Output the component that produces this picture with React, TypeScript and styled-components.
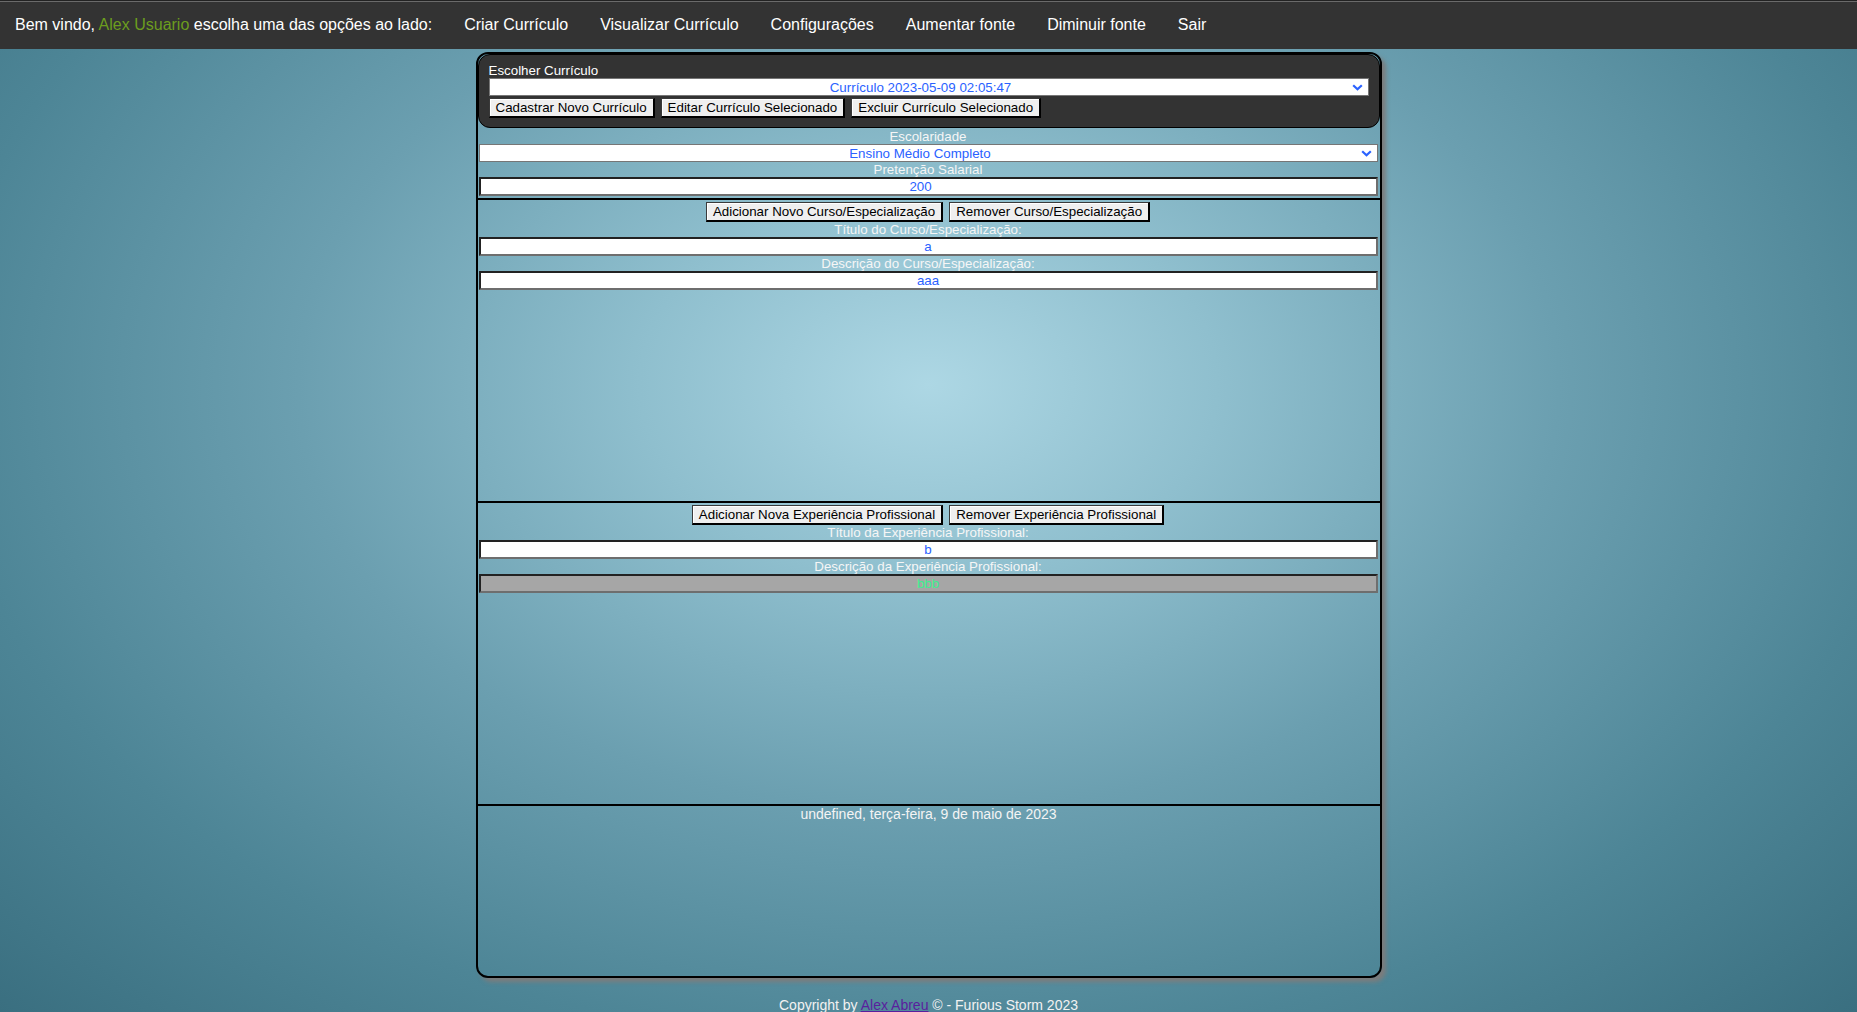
import React from "react";
import styled, { createGlobalStyle } from "styled-components";

const GlobalStyle = createGlobalStyle`
  html {
    min-height: 100%;
    background: radial-gradient(
      ellipse farthest-corner at 50% 38%,
      #add7e4 0%,
      #8fbfce 22%,
      #6b9fb0 48%,
      #4d8596 75%,
      #3a6f80 100%
    );
    background-attachment: fixed;
  }
  body {
    margin: 0;
    font-family: "Liberation Sans", Arial, sans-serif;
  }
`;

const NavBar = styled.nav`
  height: 49px;
  box-sizing: border-box;
  background: #333;
  border-top: 1px solid #222;
  box-shadow: inset 0 1px 0 #6a6a6a;
  display: flex;
  align-items: center;
  padding: 0 0 0 15px;
  color: #fff;
  font-size: 16px;
`;

const Greeting = styled.span`
  margin-right: 16px;
`;

const UserName = styled.span`
  color: #6c9d1e;
`;

const NavLinks = styled.ul`
  display: flex;
  list-style: none;
  margin: 0;
  padding: 0;
`;

const NavItem = styled.li`
  padding: 0 16px;
  cursor: pointer;
`;

const Card = styled.main`
  width: 906px;
  height: 926px;
  box-sizing: border-box;
  margin: 3px auto 0;
  border: 2px solid #000;
  border-radius: 12px;
  box-shadow: 4px 4px 4px #7c7c7c;
  display: flex;
  flex-direction: column;
  font-size: 13.33px;
  color: #f4f4f4;
`;

const ChooserPanel = styled.section`
  background: #333;
  border: 1px solid #000;
  border-radius: 12px;
  padding: 8px 10px 9px;
  display: flex;
  flex-direction: column;
  color: #fff;
`;

const PanelLabel = styled.label`
  line-height: 15px;
`;

const ButtonRow = styled.div<{ $center?: boolean }>`
  display: flex;
  gap: 6px;
  justify-content: ${(p) => (p.$center ? "center" : "flex-start")};
  margin-top: ${(p) => (p.$center ? "1px" : "2px")};
`;

const Button = styled.button`
  font-family: "Liberation Sans", Arial, sans-serif;
  font-size: 13.33px;
  line-height: 15px;
  height: 20px;
  box-sizing: border-box;
  padding: 1px 6px;
  background: #efefef;
  color: #000;
  border-style: solid;
  border-width: 1px 2px 2px 1px;
  border-color: #3a3a3a #000 #000 #3a3a3a;
  box-shadow: inset 1px 1px 0 #fff;
  cursor: pointer;
`;

const SelectBox = styled.div`
  position: relative;
  height: 18px;
`;

const Select = styled.select`
  width: 100%;
  height: 18px;
  box-sizing: border-box;
  appearance: none;
  border: 1px solid #767676;
  background: #fff;
  color: #2a62ff;
  font-family: "Liberation Sans", Arial, sans-serif;
  font-size: 13.33px;
  padding: 0 16px 0 0;
  text-align: center;
  text-align-last: center;
  outline: none;
`;

const Chevron = styled.svg`
  position: absolute;
  right: 6px;
  top: 6px;
  pointer-events: none;
`;

const FormBlock = styled.section`
  display: flex;
  flex-direction: column;
  margin: 0 2px 0 1px;
  padding: 1px 0 2px;
`;

const FieldLabel = styled.label`
  display: block;
  text-align: center;
  line-height: 15px;
  color: #f6f6f6;
`;

const TextField = styled.input<{ $disabled?: boolean; $spin?: boolean }>`
  width: 100%;
  height: 19px;
  box-sizing: border-box;
  font-family: "Liberation Sans", Arial, sans-serif;
  font-size: 13.33px;
  text-align: center;
  padding: 0 ${(p) => (p.$spin ? "15px" : "0")} 0 0;
  border-style: solid;
  border-width: 2px;
  border-color: #222 #6e6e6e #6e6e6e #222;
  background: ${(p) => (p.$disabled ? "#a6a6a6" : "#fff")};
  color: ${(p) => (p.$disabled ? "#3ef08f" : "#2a62ff")};
  outline: none;
`;

const EntrySection = styled.section`
  height: 300px;
  border-top: 2px solid #000;
  padding: 1px 2px 0 1px;
  display: flex;
  flex-direction: column;
`;

const DateFooter = styled.section`
  flex: 1;
  border-top: 2px solid #000;
  text-align: center;
  font-size: 14px;
  line-height: 15px;
  padding-top: 1px;
  color: #f4f4f4;
`;

const Copyright = styled.footer`
  margin-top: 19px;
  text-align: center;
  font-size: 14px;
  line-height: 16px;
  color: #f2f2f2;
`;

const AuthorLink = styled.a`
  color: #5a1f9e;
  text-decoration: underline;
`;

const ChevronIcon: React.FC = () => (
  <Chevron width="11" height="7" viewBox="0 0 11 7">
    <path d="M1.2 1.2 L5.5 5.3 L9.8 1.2" fill="none" stroke="#2a62ff" strokeWidth="2.2" />
  </Chevron>
);

interface DropdownProps {
  value: string;
  options: string[];
}

const Dropdown: React.FC<DropdownProps> = ({ value, options }) => (
  <SelectBox>
    <Select defaultValue={value}>
      {options.map((o) => (
        <option key={o}>{o}</option>
      ))}
    </Select>
    <ChevronIcon />
  </SelectBox>
);

interface EntryProps {
  addLabel: string;
  removeLabel: string;
  titleLabel: string;
  descLabel: string;
  title: string;
  desc: string;
  descDisabled?: boolean;
}

const Entry: React.FC<EntryProps> = (props) => {
  const { addLabel, removeLabel, titleLabel, descLabel, title, desc, descDisabled } = props;
  return (
    <EntrySection>
      <ButtonRow $center>
        <Button>{addLabel}</Button>
        <Button>{removeLabel}</Button>
      </ButtonRow>
      <FieldLabel>{titleLabel}</FieldLabel>
      <TextField defaultValue={title} />
      <FieldLabel>{descLabel}</FieldLabel>
      <TextField defaultValue={desc} $disabled={descDisabled} disabled={descDisabled} />
    </EntrySection>
  );
};

const navItems = [
  "Criar Currículo",
  "Visualizar Currículo",
  "Configurações",
  "Aumentar fonte",
  "Diminuir fonte",
  "Sair",
];

const App: React.FC = () => {
  return (
    <>
      <GlobalStyle />
      <NavBar>
        <Greeting>
          Bem vindo, <UserName>Alex Usuario</UserName> escolha uma das opções ao lado:
        </Greeting>
        <NavLinks>
          {navItems.map((item) => (
            <NavItem key={item}>{item}</NavItem>
          ))}
        </NavLinks>
      </NavBar>

      <Card>
        <ChooserPanel>
          <PanelLabel>Escolher Currículo</PanelLabel>
          <Dropdown
            value="Currículo 2023-05-09 02:05:47"
            options={["Currículo 2023-05-09 02:05:47"]}
          />
          <ButtonRow>
            <Button>Cadastrar Novo Currículo</Button>
            <Button>Editar Currículo Selecionado</Button>
            <Button>Excluir Currículo Selecionado</Button>
          </ButtonRow>
        </ChooserPanel>

        <FormBlock>
          <FieldLabel>Escolaridade</FieldLabel>
          <Dropdown
            value="Ensino Médio Completo"
            options={[
              "Ensino Fundamental Incompleto",
              "Ensino Fundamental Completo",
              "Ensino Médio Incompleto",
              "Ensino Médio Completo",
              "Ensino Superior Incompleto",
              "Ensino Superior Completo",
            ]}
          />
          <FieldLabel>Pretenção Salarial</FieldLabel>
          <TextField defaultValue="200" $spin />
        </FormBlock>

        <Entry
          addLabel="Adicionar Novo Curso/Especialização"
          removeLabel="Remover Curso/Especialização"
          titleLabel="Título do Curso/Especialização:"
          descLabel="Descrição do Curso/Especialização:"
          title="a"
          desc="aaa"
        />

        <Entry
          addLabel="Adicionar Nova Experiência Profissional"
          removeLabel="Remover Experiência Profissional"
          titleLabel="Título da Experiência Profissional:"
          descLabel="Descrição da Experiência Profissional:"
          title="b"
          desc="bbb"
          descDisabled
        />

        <DateFooter>undefined, terça-feira, 9 de maio de 2023</DateFooter>
      </Card>

      <Copyright>
        Copyright by <AuthorLink href="#">Alex Abreu</AuthorLink> © - Furious Storm 2023
      </Copyright>
    </>
  );
};

export default App;
